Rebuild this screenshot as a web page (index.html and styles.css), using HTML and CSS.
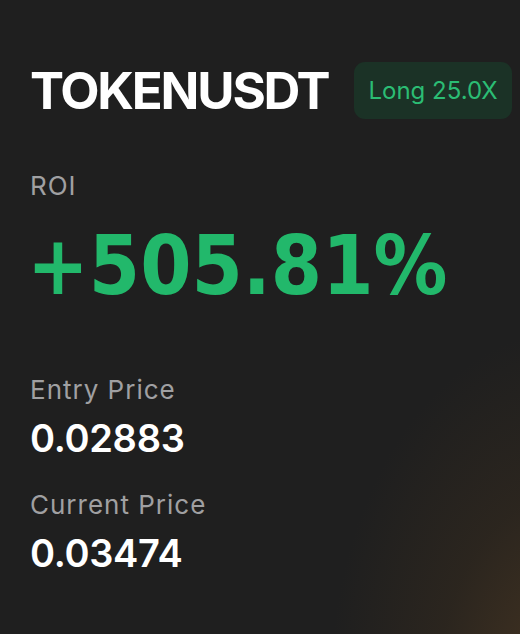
FILE: index.html
```html
<!DOCTYPE html>
<html>
<head>
<meta charset="utf-8">
<link rel="stylesheet" href="styles.css">
</head>
<body>
<div class="card">
  <div class="header">
    <div class="symbol">TOKENUSDT</div>
    <div class="badge">Long 25.0X</div>
  </div>
  <div class="label roi-label">ROI</div>
  <div class="roi">+505.81%</div>
  <div class="label entry-label">Entry Price</div>
  <div class="value">0.02883</div>
  <div class="label current-label">Current Price</div>
  <div class="value">0.03474</div>
</div>
</body>
</html>
```

FILE: styles.css
```css
html, body {
  margin: 0;
  padding: 0;
}
body {
  width: 520px;
  height: 634px;
  overflow: hidden;
  background: #1f1f1f;
  font-family: Inter, "Noto Sans", sans-serif;
}
.card {
  width: 520px;
  height: 634px;
  box-sizing: border-box;
  padding: 62px 0 0 30px;
  display: flex;
  flex-direction: column;
  align-items: flex-start;
  background:
    radial-gradient(ellipse 240px 360px at 570px 690px, rgba(72, 54, 34, 0.95), rgba(58, 45, 30, 0.45) 55%, rgba(31, 31, 31, 0) 100%),
    #1f1f1f;
}
.header {
  display: flex;
  align-items: center;
  gap: 26px;
}
.symbol {
  color: #ffffff;
  font-weight: 700;
  font-size: 51px;
  line-height: 57px;
  letter-spacing: -2.2px;
}
.badge {
  height: 57px;
  box-sizing: border-box;
  padding: 0 14px;
  display: flex;
  align-items: center;
  white-space: nowrap;
  border-radius: 11px;
  background: #1b3226;
  color: #2bbd74;
  font-size: 24px;
}
.label {
  color: #a0a0a2;
  font-size: 26px;
  line-height: 32px;
  font-weight: 400;
  letter-spacing: 1px;
}
.roi-label {
  margin-top: 51px;
}
.roi {
  color: #22b86b;
  font-family: "DejaVu Sans Condensed", "DejaVu Sans", sans-serif;
  font-stretch: condensed;
  font-weight: 700;
  font-size: 82px;
  line-height: 90px;
  margin-top: 19px;
  margin-left: -3px;
}
.entry-label {
  margin-top: 63px;
}
.current-label {
  margin-top: 29px;
}
.value {
  color: #ffffff;
  font-weight: 600;
  font-size: 38px;
  line-height: 44px;
  margin-top: 10px;
  letter-spacing: -0.3px;
}
```
